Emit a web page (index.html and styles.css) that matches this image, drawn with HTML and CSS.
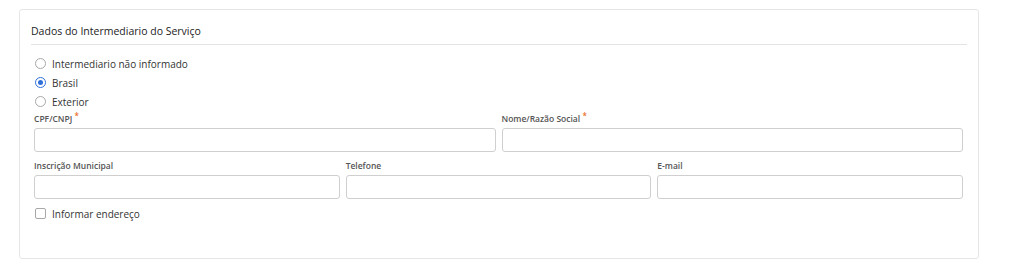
FILE: index.html
```html
<!DOCTYPE html>
<html lang="pt-BR">
<head>
    <meta charset="UTF-8">
    <title>Dados do Intermediario do Serviço</title>
    <link rel="stylesheet" href="styles.css">
</head>
<body>
    <div class="panel">
        <div class="panel-title">Dados do Intermediario do Serviço</div>
        <div class="panel-body">
            <div class="options">
                <label class="option"><span class="radio"></span>Intermediario não informado</label>
                <label class="option"><span class="radio checked"></span>Brasil</label>
                <label class="option"><span class="radio"></span>Exterior</label>
            </div>
            <div class="row cols-2">
                <div class="field">
                    <label>CPF/CNPJ <span class="req">*</span></label>
                    <div class="input"></div>
                </div>
                <div class="field">
                    <label>Nome/Razão Social <span class="req">*</span></label>
                    <div class="input"></div>
                </div>
            </div>
            <div class="row cols-3">
                <div class="field">
                    <label>Inscrição Municipal</label>
                    <div class="input"></div>
                </div>
                <div class="field">
                    <label>Telefone</label>
                    <div class="input"></div>
                </div>
                <div class="field">
                    <label>E-mail</label>
                    <div class="input"></div>
                </div>
            </div>
            <label class="option check-row"><span class="checkbox"></span>Informar endereço</label>
        </div>
    </div>
</body>
</html>
```

FILE: styles.css
```css
* {
    margin: 0;
    padding: 0;
    box-sizing: border-box;
}

body {
    font-family: "Open Sans", sans-serif;
    background: #fff;
    color: #333;
}

.panel {
    width: 960px;
    height: 250px;
    margin: 9px 0 0 19px;
    padding: 0 11px;
    border: 1px solid #e6e6e6;
    border-radius: 3px;
}

.panel-title {
    font-size: 10.5px;
    font-weight: 500;
    line-height: 16px;
    padding: 13px 0 5px;
    border-bottom: 1px solid #e3e3e3;
    color: #222;
}

.panel-body {
    padding: 0 4px 0 3px;
}

.options {
    margin-top: 9px;
}

.option {
    display: flex;
    align-items: center;
    height: 19px;
    font-size: 10px;
    color: #333;
}

.radio {
    width: 11px;
    height: 11px;
    border: 1px solid #a8a8a8;
    border-radius: 50%;
    margin: 0 6px 0 1px;
    position: relative;
}

.radio.checked {
    border-color: #2f6fd8;
}

.radio.checked::after {
    content: "";
    position: absolute;
    left: 2px;
    top: 2px;
    width: 5px;
    height: 5px;
    border-radius: 50%;
    background: #2f6fd8;
}

.checkbox {
    width: 11px;
    height: 11px;
    border: 1px solid #a8a8a8;
    border-radius: 2px;
    margin: 0 6px 0 1px;
}

.row {
    display: grid;
    gap: 6px;
    margin-top: 1px;
}

.row + .row {
    margin-top: 7px;
}

.cols-2 {
    grid-template-columns: 1fr 1fr;
}

.cols-3 {
    grid-template-columns: 1fr 1fr 1fr;
}

.field label {
    display: block;
    height: 14px;
    font-size: 8.5px;
    font-weight: 600;
    line-height: 14px;
    margin-bottom: 2px;
    color: #555;
}

.req {
    color: #e8702a;
    font-size: 8px;
    line-height: 0;
    vertical-align: 3px;
}

.input {
    height: 24px;
    border: 1px solid #cfcfcf;
    border-radius: 3px;
    background: #fff;
}

.check-row {
    margin-top: 5px;
}
```
